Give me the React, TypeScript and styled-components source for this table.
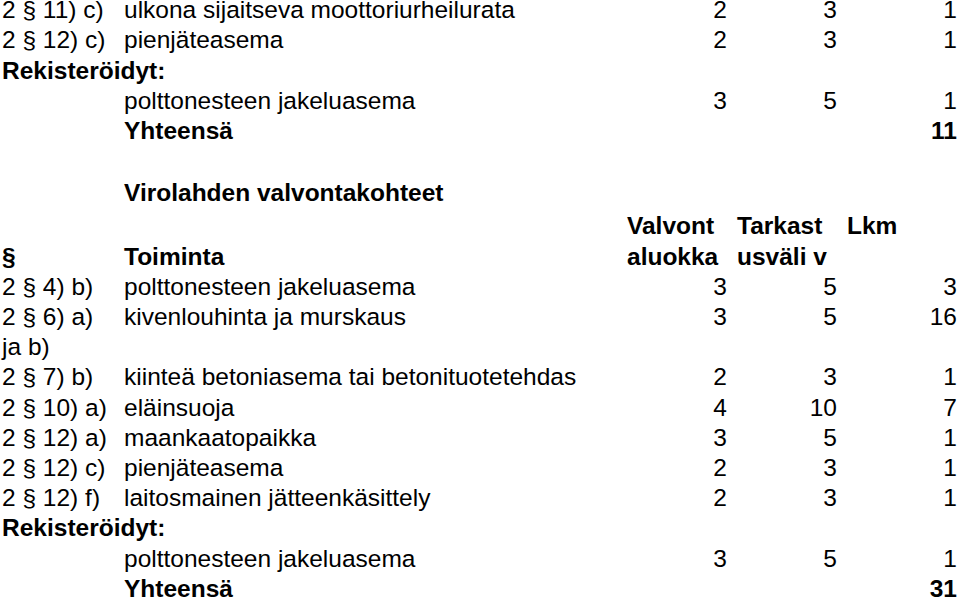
import React from 'react';
import styled, { createGlobalStyle } from 'styled-components';

const GlobalStyle = createGlobalStyle`
  html, body {
    margin: 0;
    padding: 0;
    background: #fff;
  }
  body {
    font-family: 'Liberation Sans', Arial, Helvetica, sans-serif;
    font-size: 24.5px;
    line-height: 30.2px;
    color: #000;
    overflow: hidden;
  }
`;

const Page = styled.div`
  width: 960px;
  margin-top: -4.9px;
`;

const Row = styled.div<{ $gap?: number; $header?: boolean }>`
  display: grid;
  grid-template-columns: 122px 500px 110px 110px 118px;
  align-items: ${(p) => (p.$header ? 'end' : 'start')};
  margin-top: ${(p) => p.$gap ?? 0}px;
`;

const Code = styled.div<{ $bold?: boolean }>`
  padding: 0 12px 0 2px;
  font-weight: ${(p) => (p.$bold ? 700 : 400)};
`;

const Name = styled.div<{ $bold?: boolean }>`
  padding-left: 2px;
  font-weight: ${(p) => (p.$bold ? 700 : 400)};
  white-space: nowrap;
`;

const Num = styled.div<{ $bold?: boolean }>`
  text-align: right;
  padding-right: 5px;
  font-weight: ${(p) => (p.$bold ? 700 : 400)};
  &:last-child {
    padding-right: 3px;
  }
`;

const HeadCell = styled.div`
  padding-left: 5px;
  font-weight: 700;
  align-self: start;
  white-space: pre-line;
`;

const Full = styled.div`
  grid-column: 1 / -1;
  padding-left: 2px;
  font-weight: 700;
`;

type Item = [string, string, string, string, string];

const first: Item[] = [
  ['2 § 11) c)', 'ulkona sijaitseva moottoriurheilurata', '2', '3', '1'],
  ['2 § 12) c)', 'pienjäteasema', '2', '3', '1'],
];

const second: Item[] = [
  ['2 § 4) b)', 'polttonesteen jakeluasema', '3', '5', '3'],
  ['2 § 6) a) ja b)', 'kivenlouhinta ja murskaus', '3', '5', '16'],
  ['2 § 7) b)', 'kiinteä betoniasema tai betonituotetehdas', '2', '3', '1'],
  ['2 § 10) a)', 'eläinsuoja', '4', '10', '7'],
  ['2 § 12) a)', 'maankaatopaikka', '3', '5', '1'],
  ['2 § 12) c)', 'pienjäteasema', '2', '3', '1'],
  ['2 § 12) f)', 'laitosmainen jätteenkäsittely', '2', '3', '1'],
];

const DataRow = ({ item }: { item: Item }) => (
  <Row>
    <Code>{item[0]}</Code>
    <Name>{item[1]}</Name>
    <Num>{item[2]}</Num>
    <Num>{item[3]}</Num>
    <Num>{item[4]}</Num>
  </Row>
);

const Registered = ({ total }: { total: string }) => (
  <>
    <Row>
      <Full>Rekisteröidyt:</Full>
    </Row>
    <DataRow item={['', 'polttonesteen jakeluasema', '3', '5', '1']} />
    <Row>
      <Code />
      <Name $bold>Yhteensä</Name>
      <Num />
      <Num />
      <Num $bold>{total}</Num>
    </Row>
  </>
);

const App = (): JSX.Element => (
  <>
    <GlobalStyle />
    <Page>
      {first.map((it) => (
        <DataRow key={it[0]} item={it} />
      ))}
      <Registered total="11" />

      <Row $gap={32}>
        <Code />
        <Name $bold>Virolahden valvontakohteet</Name>
      </Row>
      <Row $header $gap={3}>
        <Code $bold>§</Code>
        <Name $bold>Toiminta</Name>
        <HeadCell>{'Valvont\naluokka'}</HeadCell>
        <HeadCell>{'Tarkast\nusväli v'}</HeadCell>
        <HeadCell>Lkm</HeadCell>
      </Row>
      {second.map((it) => (
        <DataRow key={it[0]} item={it} />
      ))}
      <Registered total="31" />
    </Page>
  </>
);

export default App;
